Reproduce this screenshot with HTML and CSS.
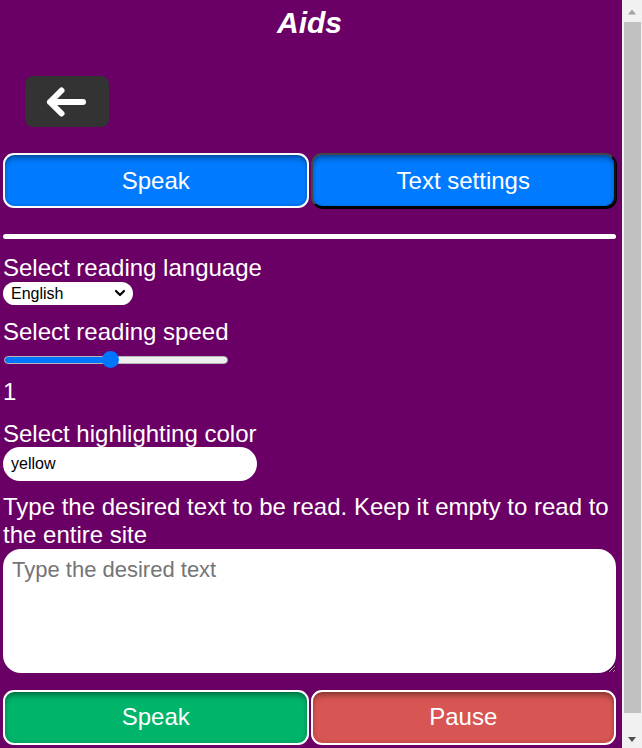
FILE: index.html
```html
<!DOCTYPE html>
<html lang="en">
<head>
<meta charset="utf-8">
<title>Aids</title>
<link rel="stylesheet" href="styles.css">
</head>
<body>
<div class="page">
  <div class="app">
    <h1 class="title">Aids</h1>
    <button class="back" type="button" aria-label="Back">
      <svg class="back-icon" width="44" height="34" viewBox="0 0 44 34" aria-hidden="true">
        <path d="M38 17 H5 M16.5 5.5 L5 17 L16.5 28.5" fill="none" stroke="#fff" stroke-width="6" stroke-linecap="round" stroke-linejoin="round"/>
      </svg>
    </button>
    <div class="tabs">
      <button class="tab tab-speak" type="button">Speak</button>
      <button class="tab tab-text" type="button">Text settings</button>
    </div>
    <div class="divider"></div>

    <label class="label label-first" for="lang">Select reading language</label>
    <div class="select-wrap">
      <select class="select" id="lang"><option>English</option></select>
      <svg class="chevron" width="12" height="8" viewBox="0 0 12 8" aria-hidden="true">
        <path d="M2 2 L6 6 L10 2" fill="none" stroke="#000" stroke-width="2.2" stroke-linecap="round" stroke-linejoin="round"/>
      </svg>
    </div>

    <label class="label label-gap" for="speed">Select reading speed</label>
    <input class="range" id="speed" type="range" min="0.1" max="2" step="0.1" value="1">
    <div class="speed-value">1</div>

    <label class="label label-gap2" for="color">Select highlighting color</label>
    <input class="text-input" id="color" type="text" value="yellow">

    <label class="label para" for="txt">Type the desired text to be read. Keep it empty to read to the entire site</label>
    <textarea class="textarea" id="txt" placeholder="Type the desired text"></textarea>

    <div class="actions">
      <button class="action action-speak" type="button">Speak</button>
      <button class="action action-pause" type="button">Pause</button>
    </div>
  </div>

  <div class="scrollbar" aria-hidden="true">
    <svg class="sb-btn" width="20" height="20" viewBox="0 0 20 20"><path d="M6 14.5 L10 9.5 L14 14.5 Z" fill="#a3a3a3"/></svg>
    <div class="sb-track"><div class="sb-thumb"></div></div>
    <svg class="sb-btn" width="20" height="20" viewBox="0 0 20 20"><path d="M6 9 L14 9 L10 14 Z" fill="#505050"/></svg>
  </div>
</div>
</body>
</html>
```
FILE: styles.css
```css
html, body {
  margin: 0;
  padding: 0;
  background: #6a0066;
}

.page {
  display: flex;
  height: 748px;
  overflow: hidden;
}

.app {
  flex: none;
  box-sizing: border-box;
  width: 622px;
  padding: 0 6px 18px 3px;
  font-family: "Liberation Sans", Arial, sans-serif;
  font-size: 24px;
  line-height: 1.15;
  color: #fff;
}

/* page scrollbar */
.scrollbar {
  flex: none;
  width: 20px;
  display: flex;
  flex-direction: column;
  background: #f1f1f1;
}

.sb-btn {
  display: block;
  flex: none;
}

.sb-track {
  flex: 1;
  display: flex;
  flex-direction: column;
  padding: 2px 1px 15px 2px;
}

.sb-thumb {
  flex: 1;
  background: #c1c1c1;
}

.title {
  margin: 6px 0 0;
  font-size: 30px;
  line-height: 34px;
  font-weight: bold;
  font-style: italic;
  text-align: center;
}

.back {
  display: flex;
  align-items: center;
  justify-content: center;
  margin: 36px 0 0 22px;
  width: 84px;
  height: 51px;
  padding: 0;
  border: 0;
  border-radius: 8px;
  background: #333333;
}

.tabs,
.actions {
  display: flex;
  gap: 2px;
}

.tabs {
  margin-top: 26px;
}

.tab,
.action {
  flex: 1;
  box-sizing: border-box;
  height: 55px;
  padding: 0;
  border-radius: 11px;
  font-family: "Liberation Sans", Arial, sans-serif;
  font-size: 24px;
  color: #fff;
}

.tab {
  background: #007bff;
}

.tab-speak {
  border: 2px solid #fff;
  box-shadow: inset 0 6px 6px -3px rgba(0, 0, 0, 0.35), inset 0 0 4px rgba(0, 0, 0, 0.2);
}

.tab-text {
  border: 2px solid #454545;
  border-right-color: #111;
  border-bottom-color: #000;
  box-shadow: 1px 1px 0 #000, inset 0 6px 6px -3px rgba(0, 0, 0, 0.35), inset 0 0 4px rgba(0, 0, 0, 0.2);
}

.divider {
  margin-top: 26px;
  height: 5px;
  border-radius: 3px;
  background: #fff;
}

.label {
  display: block;
}

.label-first {
  margin-top: 15px;
}

.label-gap {
  margin-top: 13px;
}

.label-gap2 {
  margin-top: 14px;
}

.select-wrap {
  display: flex;
  align-items: center;
  box-sizing: border-box;
  width: 130px;
  height: 23px;
  padding: 0 7px 0 8px;
  border-radius: 12px;
  background: #fff;
}

.select {
  flex: 1;
  min-width: 0;
  height: 23px;
  padding: 0;
  border: 0;
  -webkit-appearance: none;
  appearance: none;
  background: transparent;
  color: #000;
  font-family: "Liberation Sans", Arial, sans-serif;
  font-size: 16px;
  outline: none;
}

.chevron {
  display: block;
  flex: none;
}

.range {
  display: block;
  -webkit-appearance: none;
  appearance: none;
  width: 224px;
  height: 17px;
  margin: 6px 0 0 1px;
  padding: 0;
  background: transparent;
}

.range::-webkit-slider-runnable-track {
  height: 8px;
  border: 1px solid #b5b5b5;
  border-radius: 5px;
  background: linear-gradient(to right, #0075ff 0 106px, #efefef 106px);
}

.range::-webkit-slider-thumb {
  -webkit-appearance: none;
  appearance: none;
  width: 17px;
  height: 17px;
  margin-top: -5.5px;
  border: 0;
  border-radius: 50%;
  background: #0075ff;
}

.speed-value {
  margin-top: 10px;
}

.text-input {
  display: block;
  box-sizing: border-box;
  width: 254px;
  height: 34px;
  padding: 0 8px;
  border: 0;
  border-radius: 17px;
  background: #fff;
  color: #000;
  font-family: "Liberation Sans", Arial, sans-serif;
  font-size: 16px;
}

.para {
  margin-top: 12px;
}

.textarea {
  display: block;
  box-sizing: border-box;
  width: 613px;
  height: 124px;
  margin-top: 0;
  padding: 8px 9px;
  border: 0;
  border-radius: 18px;
  background: #fff;
  font-family: "Liberation Sans", Arial, sans-serif;
  font-size: 22px;
}

.actions {
  margin-top: 17px;
}

.action {
  border: 2px solid #fff;
  box-shadow: inset 0 6px 6px -3px rgba(0, 0, 0, 0.35), inset 0 0 4px rgba(0, 0, 0, 0.2);
}

.action-speak {
  background: #00b46a;
}

.action-pause {
  background: #d75552;
}
```
